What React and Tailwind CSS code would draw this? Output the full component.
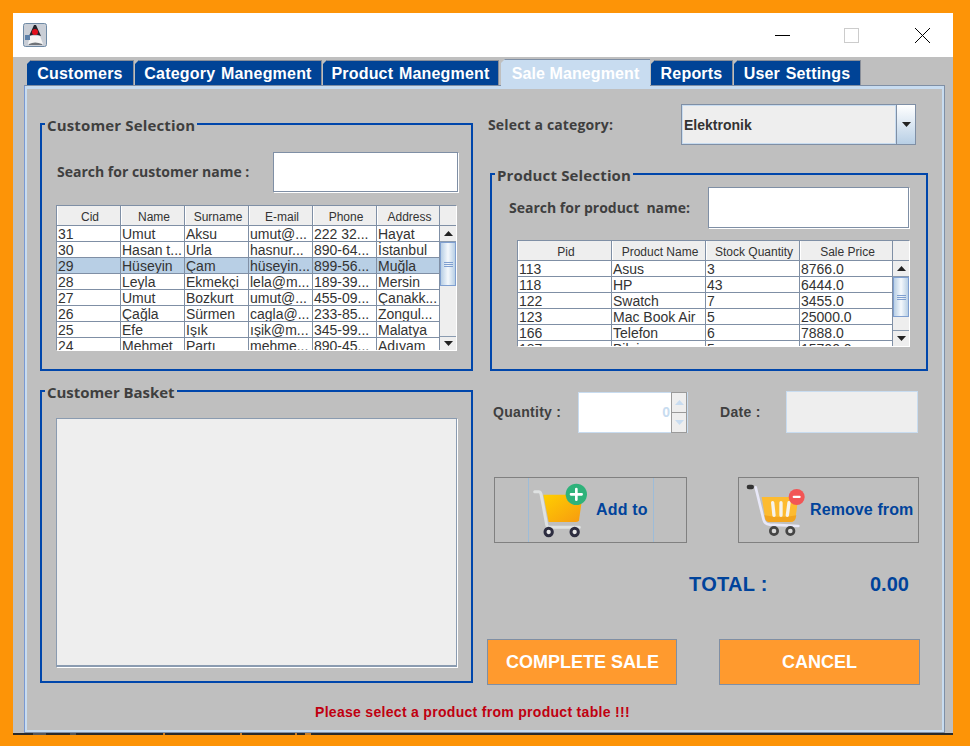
import React from 'react';

const tabs = [
  { label: 'Customers', w: 'w-[107px]' },
  { label: 'Category Manegment', w: 'w-[187px]' },
  { label: 'Product Manegment', w: 'w-[176px]' },
  { label: 'Sale Manegment', w: 'w-[149px]', active: true },
  { label: 'Reports', w: 'w-[82px]' },
  { label: 'User Settings', w: 'w-[127px]' },
];

const customerCols = ['Cid', 'Name', 'Surname', 'E-mail', 'Phone', 'Address'];
const customerRows = [
  ['31', 'Umut', 'Aksu', 'umut@...', '222 32...', 'Hayat'],
  ['30', 'Hasan t...', 'Urla', 'hasnur...', '890-64...', 'İstanbul'],
  ['29', 'Hüseyin', 'Çam', 'hüseyin...', '899-56...', 'Muğla'],
  ['28', 'Leyla', 'Ekmekçi', 'lela@m...', '189-39...', 'Mersin'],
  ['27', 'Umut', 'Bozkurt', 'umut@...', '455-09...', 'Çanakk...'],
  ['26', 'Çağla', 'Sürmen', 'cagla@...', '233-85...', 'Zongul...'],
  ['25', 'Efe', 'Işık', 'ışik@m...', '345-99...', 'Malatya'],
  ['24', 'Mehmet', 'Partı', 'mehme...', '890-45...', 'Adıyam'],
];

const productCols = ['Pid', 'Product Name', 'Stock Quantity', 'Sale Price'];
const productRows = [
  ['113', 'Asus', '3', '8766.0'],
  ['118', 'HP', '43', '6444.0'],
  ['122', 'Swatch', '7', '3455.0'],
  ['123', 'Mac Book Air', '5', '25000.0'],
  ['166', 'Telefon', '6', '7888.0'],
  ['187', 'Bilgisayar', '5', '15700.0'],
];

// bits of the desktop showing through under the window
const stripMarks = [
  { w: 'w-[13px]', ml: 'ml-[20px]', bg: 'bg-[#55585c]' },
  { w: 'w-[6px]', ml: 'ml-[24px]', bg: 'bg-[#55585c]' },
  { w: 'w-[2px]', ml: 'ml-[87px]', bg: 'bg-[#c9802a]' },
  { w: 'w-[2px]', ml: 'ml-[75px]', bg: 'bg-[#c9802a]' },
  { w: 'w-[2px]', ml: 'ml-[53px]', bg: 'bg-[#c9802a]' },
  { w: 'w-[6px]', ml: 'ml-[8px]', bg: 'bg-[#c9802a]' },
];

const Arrow = ({ up }) => (
  <svg width="9" height="5" viewBox="0 0 9 5" className="block">
    <path d={up ? 'M0 5 L4.5 0 L9 5 Z' : 'M0 0 L9 0 L4.5 5 Z'} fill="#222" />
  </svg>
);

const ScrollBar = ({ thumbH, trackH }) => (
  <div className="w-[16px] flex flex-col bg-[#eeeeee] shrink-0">
    <div className="h-[16px] flex items-center justify-center bg-[#eeeeee] border-b border-[#8a9bb0]">
      <Arrow up />
    </div>
    <div
      className="flex items-center justify-center border border-[#7f9fd0] bg-gradient-to-r from-[#b8cfe5] via-[#f4f8fc] to-[#b8cfe5]"
      style={{ height: thumbH }}
    >
      <div className="w-[9px] h-[5px] border-y border-[#7f9fd0] flex items-center">
        <div className="w-full h-px bg-[#7f9fd0]" />
      </div>
    </div>
    <div style={{ height: trackH }} />
    <div className="flex-1 flex items-center justify-center border-t border-[#8a9bb0]">
      <Arrow />
    </div>
  </div>
);

const DataTable = ({ cols, rows, colClass, selected, thumbH, trackH }) => (
  <div className="h-full flex flex-col overflow-hidden border-l border-t border-[#7f8fa5] shadow-[1px_1px_0_#ffffff] font-['Liberation_Sans',sans-serif]">
    <div className="flex h-[20px] shrink-0 bg-[#eeeeee] border-b border-[#7f8fa5]">
      {cols.map((c, i) => (
        <div key={c} className={`${colClass[i]} pt-[2px] pl-[2px] flex items-center justify-center border-r border-[#7f8fa5] border-l border-l-white text-[#333333] text-[12px]`}>
          {c}
        </div>
      ))}
      <div className="flex-1" />
    </div>
    <div className="flex flex-1 min-h-0">
      <div className="flex-1 overflow-hidden bg-white">
        {rows.map((row, r) => (
          <div key={row[0]} className={`flex h-[16px] border-b border-[#7f8fa5] ${r === selected ? 'bg-[#b8cfe5]' : ''}`}>
            {row.map((cell, i) => (
              <div key={i} className={`${colClass[i]} border-r border-[#7f8fa5] pl-[1px] text-[14px] leading-[16px] text-[#333333] whitespace-nowrap overflow-hidden`}>
                {cell}
              </div>
            ))}
          </div>
        ))}
      </div>
      <ScrollBar thumbH={thumbH} trackH={trackH} />
    </div>
  </div>
);

const GroupBox = ({ title, className, titleClass = 'tracking-[0.15px]', children }) => (
  <div className={`relative border-2 border-[#0046ab] ${className}`}>
    <span className={`absolute left-[3px] top-[-10px] bg-[#bfbfbf] px-[2px] text-[15px] leading-[20px] font-bold text-[#3f3f3f] font-['Open_Sans',sans-serif] whitespace-nowrap ${titleClass}`}>
      {title}
    </span>
    {children}
  </div>
);

const TextBox = ({ className }) => (
  <div className={`bg-white border border-[#7f8fa5] shadow-[1px_1px_0_#ffffff] ${className}`} />
);

const JavaIcon = () => (
  <svg width="24" height="24" viewBox="0 0 24 24">
    <rect x="0.5" y="0.5" width="23" height="23" rx="2" fill="#c9ced6" stroke="#6f8aa5" />
    <path d="M5 21 L7 13 L17 13 L20 21 Z" fill="#f4f4f4" />
    <path d="M6 13 L11 2 L13 2 L18 13 Q12 10 6 13 Z" fill="#23232b" />
    <path d="M6 21 Q12 18 19 21 L19 22 L6 22 Z" fill="#6f7378" />
    <rect x="2" y="12" width="5" height="5" fill="#5b7fa8" />
    <circle cx="12" cy="9" r="3" fill="#e3101c" />
  </svg>
);

const AddCart = () => (
  <svg width="57" height="57" viewBox="140 50 171 171" className="shrink-0">
    <defs>
      <linearGradient id="addFill" x1="0" y1="0" x2="1" y2="1">
        <stop offset="0" stopColor="#ffcf00" />
        <stop offset="1" stopColor="#f79a10" />
      </linearGradient>
    </defs>
    <path d="M174 88 L292 88 L281 165 Q280 170 272 170 L190 170 Z" fill="url(#addFill)" />
    <path d="M148 79 L160 79 Q165 79 167 86 L184 178 Q185 186 193 186 L282 186" fill="none" stroke="#dfe2e2" strokeWidth="9" strokeLinecap="round" />
    <circle cx="190" cy="200" r="11" fill="#e8e8e8" stroke="#2d2d40" strokeWidth="9" />
    <circle cx="268" cy="200" r="11" fill="#e8e8e8" stroke="#2d2d40" strokeWidth="9" />
    <circle cx="273" cy="87" r="32" fill="#2fb27a" />
    <path d="M273 71 V103 M257 87 H289" stroke="#ffffff" strokeWidth="8" strokeLinecap="round" />
  </svg>
);

const RemoveCart = () => (
  <svg width="60" height="57" viewBox="40 50 180 171" className="shrink-0">
    <path d="M90 95 L200 95 L192 155 Q190 170 175 170 L115 170 Q102 170 100 155 Z" fill="#fdbb30" />
    <path d="M98 150 Q150 160 194 150 L192 158 Q190 170 175 170 L115 170 Q102 170 100 158 Z" fill="#f2a41e" />
    <path d="M123 112 L127 150 M148 112 V150 M172 112 L167 150" stroke="#f6f3ec" strokeWidth="10" strokeLinecap="round" />
    <path d="M72 66 L95 160 Q98 176 114 178 L200 182" fill="none" stroke="#e8e8f8" strokeWidth="8" strokeLinecap="round" />
    <rect x="45" y="58" width="22" height="14" rx="7" fill="#333333" />
    <circle cx="127" cy="197" r="11" fill="#d8d8d8" stroke="#444444" strokeWidth="8" />
    <circle cx="176" cy="197" r="11" fill="#d8d8d8" stroke="#444444" strokeWidth="8" />
    <circle cx="195" cy="95" r="24" fill="#f25555" />
    <rect x="183" y="91" width="24" height="7" rx="3" fill="#ffffff" />
  </svg>
);

const SpinArrow = ({ up }) => (
  <svg width="9" height="5" viewBox="0 0 9 5">
    <path d={up ? 'M0 5 L4.5 0 L9 5 Z' : 'M0 0 L9 0 L4.5 5 Z'} fill="#c8dcf0" />
  </svg>
);

export default function App() {
  return (
    <div className="w-[970px] h-[746px] bg-[#fd9407] pt-[13px] pl-[13px] font-['Liberation_Sans',sans-serif] overflow-hidden">
      <div className="w-[940px] h-[722px] bg-[#bfbfbf] flex flex-col">
        <div className="h-[44px] shrink-0 bg-white flex items-center justify-between pl-[10px]">
          <JavaIcon />
          <div className="flex items-center">
            <div className="w-[15px] h-px bg-black mr-[54px]" />
            <div className="w-[15px] h-[15px] border border-[#cccccc] mr-[56px]" />
            <svg width="15" height="15" viewBox="0 0 15 15" className="mr-[23px]">
              <path d="M0 0 L15 15 M15 0 L0 15" stroke="#000000" strokeWidth="1" />
            </svg>
          </div>
        </div>

        <div className="h-[28px] shrink-0 flex items-end pl-[14px] gap-[1px]">
          {tabs.map((t) =>
            t.active ? (
              <div
                key={t.label}
                className={`${t.w} relative z-10 h-[30px] -mb-[4px] ml-[1px] pb-[2px] bg-[#c8dcf0] border-t border-[#7f8fa5] text-white text-[16px] font-bold tracking-[0.1px] flex items-center justify-center [clip-path:polygon(4px_0,100%_0,100%_100%,0_100%,0_4px)]`}
              >
                {t.label}
              </div>
            ) : (
              <div
                key={t.label}
                className={`${t.w} h-[25px] pt-[1px] bg-[#004396] border-t border-r border-[#8a8f99] text-white text-[16px] font-bold tracking-[0.2px] [word-spacing:1px] flex items-center justify-center [clip-path:polygon(4px_0,100%_0,100%_100%,0_100%,0_4px)]`}
              >
                {t.label}
              </div>
            )
          )}
        </div>

        <div className="ml-[11px] w-[921px] h-[648px] shrink-0 border border-[#7f8fa5] border-l-[#7a98d0]">
          <div className="h-full border-x-2 border-b-2 border-t-[3px] border-[#c8dcf0] pt-[15px] pl-[13px]">
            <div className="flex gap-[15px]">
              <div className="w-[433px] pt-[19px] flex flex-col gap-[19px]">
                <GroupBox title="Customer Selection" className="h-[248px] pt-[26px] pl-[14px] pr-[13px]">
                  <div className="flex items-center h-[41px]">
                    <span className="w-[217px] pl-[1px] text-[14px] font-bold text-[#3f3f3f] font-['Open_Sans',sans-serif] whitespace-nowrap">
                      Search for customer name :
                    </span>
                    <TextBox className="ml-[1px] w-[186px] h-[40px]" />
                  </div>
                  <div className="mt-[13px] h-[145px] w-[400px]">
                    <DataTable
                      cols={customerCols}
                      rows={customerRows}
                      colClass={['w-[64px]', 'w-[64px]', 'w-[64px]', 'w-[64px]', 'w-[64px]', 'w-[63px]']}
                      selected={2}
                      thumbH={44}
                      trackH={50}
                    />
                  </div>
                </GroupBox>
                <GroupBox title="Customer Basket" titleClass="tracking-[-0.05px]" className="h-[293px] pt-[26px] pl-[14px] pr-[15px]">
                  <div className="w-[401px] h-[249px] bg-[#eeeeee] border border-[#8a9bb0] border-b-2 shadow-[1px_1px_0_#ffffff]" />
                </GroupBox>
              </div>

              <div className="w-[440px]">
                <div className="flex items-center h-[41px]">
                  <span className="w-[193px] text-[14px] tracking-[0.15px] font-bold text-[#3f3f3f] font-['Open_Sans',sans-serif]">Select a category:</span>
                  <div className="w-[235px] h-[41px] flex border border-[#7f8fa5]">
                    <div className="flex-1 bg-[#eeeeee] border border-[#c8dcf0] flex items-center pt-[1px] pl-[1px] text-[14px] font-bold text-[#333333]">
                      Elektronik
                    </div>
                    <div className="w-[19px] bg-gradient-to-b from-white to-[#b8cfe5] border-l border-[#7f8fa5] flex items-center justify-center">
                      <Arrow />
                    </div>
                  </div>
                </div>

                <GroupBox title="Product Selection" className="mt-[28px] ml-[2px] w-[438px] h-[198px] pt-[12px] pl-[25px]">
                  <div className="flex items-center h-[41px]">
                    <span className="w-[191px] -ml-[8px] text-[14px] font-bold text-[#3f3f3f] font-['Open_Sans',sans-serif] whitespace-pre">
                      Search for product  name:
                    </span>
                    <TextBox className="ml-[8px] w-[201px] h-[41px]" />
                  </div>
                  <div className="mt-[12px] h-[106px] w-[392px]">
                    <DataTable
                      cols={productCols}
                      rows={productRows}
                      colClass={['w-[94px]', 'w-[94px]', 'w-[94px]', 'w-[93px]']}
                      thumbH={40}
                      trackH={13}
                    />
                  </div>
                </GroupBox>

                <div className="flex items-center mt-[20px] h-[42px] pl-[5px]">
                  <span className="w-[85px] text-[14px] tracking-[0.3px] font-bold text-[#3f3f3f]">Quantity :</span>
                  <div className="w-[110px] h-[41px] flex border border-[#c8dcf0]">
                    <div className="flex-1 bg-white flex items-center justify-end pr-[1px] text-[14px] font-bold text-[#c8dcf0]">0</div>
                    <div className="w-[16px] flex flex-col border border-[#9a9a9a] -my-px">
                      <div className="flex-1 bg-[#eeeeee] border-b border-[#9a9a9a] flex items-center justify-center"><SpinArrow up /></div>
                      <div className="flex-1 bg-[#eeeeee] flex items-center justify-center"><SpinArrow /></div>
                    </div>
                  </div>
                  <span className="ml-[32px] w-[66px] text-[14px] tracking-[0.3px] font-bold text-[#3f3f3f]">Date :</span>
                  <div className="w-[132px] h-[42px] bg-[#eeeeee] border border-[#c8dcf0]" />
                </div>

                <div className="flex mt-[44px] pl-[6px]">
                  <div className="w-[193px] h-[66px] border border-[#808080] pl-[33px]">
                    <div className="h-full w-[126px] border-x border-[#9dbcd8] flex items-center pl-[3px] gap-[7px]">
                      <AddCart />
                      <span className="text-[16px] tracking-[0.2px] font-bold text-[#00439b] whitespace-nowrap">Add to</span>
                    </div>
                  </div>
                  <div className="ml-[51px] w-[181px] h-[66px] border border-[#808080] flex items-center pl-[6px] gap-[5px]">
                    <RemoveCart />
                    <span className="text-[16px] tracking-[0.1px] font-bold text-[#00439b] whitespace-nowrap">Remove from</span>
                  </div>
                </div>

                <div className="flex items-center mt-[25px] h-[32px] pl-[201px] text-[20px] font-bold text-[#00439b]">
                  <span className="w-[181px] tracking-[0.3px]">TOTAL :</span>
                  <span>0.00</span>
                </div>

                <div className="flex mt-[39px] -ml-[1px]">
                  <button className="w-[190px] h-[46px] pt-[1px] pl-[1px] bg-[#ff9a2e] border border-[#7f8fa5] text-white text-[18px] font-bold">COMPLETE SALE</button>
                  <button className="ml-[42px] w-[201px] h-[46px] pt-[1px] bg-[#ff9a2e] border border-[#7f8fa5] text-white text-[18px] font-bold">CANCEL</button>
                </div>
              </div>
            </div>
            <p className="mt-[17px] pl-[275px] text-[14px] leading-[20px] tracking-[0.3px] font-bold text-[#c00010]">
              Please select a product from product table !!!
            </p>
          </div>
        </div>
        <div className="flex-1 bg-[#2a2a2a] flex">
          {stripMarks.map((m, i) => (
            <div key={i} className={`${m.w} ${m.ml} ${m.bg}`} />
          ))}
        </div>
      </div>
    </div>
  );
}
